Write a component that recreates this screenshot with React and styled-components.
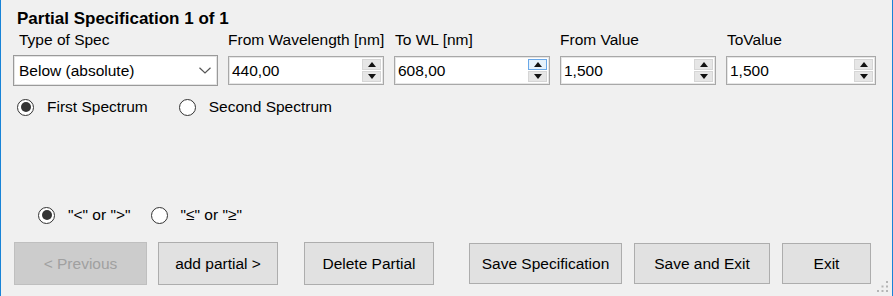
import React from 'react';
import styled, { createGlobalStyle } from 'styled-components';

const GlobalStyle = createGlobalStyle`
  html, body {
    margin: 0;
    padding: 0;
    background: #f0f0f0;
  }
  body {
    font-family: "Liberation Sans", Arial, sans-serif;
  }
`;

const Window = styled.div`
  position: relative;
  width: 893px;
  height: 296px;
  box-sizing: border-box;
  border-left: 1px solid #1883d7;
  border-right: 1px solid #1883d7;
  background: #f0f0f0;
  padding: 9px 0 0 12px;
  display: flex;
  flex-direction: column;
  font-size: 15.5px;
  color: #000;
  overflow: hidden;
`;

const Title = styled.div`
  padding-left: 4px;
  font-size: 17px;
  font-weight: 700;
  line-height: 20px;
`;

const FieldRow = styled.div`
  display: flex;
  gap: 10px;
  margin-top: 2px;
`;

const Column = styled.div`
  display: flex;
  flex-direction: column;
  width: ${(p) => p.$w}px;
`;

const Label = styled.div`
  height: 18px;
  line-height: 18px;
  padding-left: ${(p) => p.$indent || 0}px;
  margin-bottom: 6px;
  white-space: nowrap;
`;

const Combo = styled.div`
  height: 31px;
  box-sizing: border-box;
  border: 1px solid #9a9a9a;
  box-shadow: inset 0 0 0 1px #e4e4e4;
  background: #fff;
  display: flex;
  align-items: center;
  justify-content: space-between;
  padding: 0 6px 0 5px;
  line-height: 29px;
`;

const NumBox = styled.div`
  height: 29px;
  margin-top: 1px;
  box-sizing: border-box;
  border: 1px solid #a8a8a8;
  box-shadow: inset 0 0 0 1px #e6e6e6;
  background: #fff;
  display: flex;
`;

const NumText = styled.div`
  flex: 1;
  padding-left: 3px;
  line-height: 27px;
`;

const Spinner = styled.div`
  width: 19px;
  margin: 2px 2px 2px 0;
  display: flex;
  flex-direction: column;
  gap: 1px;
`;

const SpinButton = styled.div`
  flex: 1;
  box-sizing: border-box;
  display: flex;
  align-items: center;
  justify-content: center;
  background: ${(p) => (p.$hot ? '#e5f1fb' : '#e6e6e6')};
  border: 1px solid ${(p) => (p.$hot ? '#6aa8e8' : '#d6d6d6')};
`;

const Arrow = styled.span`
  width: 0;
  height: 0;
  border-left: 4.5px solid transparent;
  border-right: 4.5px solid transparent;
  ${(p) =>
    p.$up ? 'border-bottom: 5px solid #111;' : 'border-top: 5px solid #111;'}
`;

const RadioRow = styled.div`
  display: flex;
  align-items: center;
  height: 18px;
  margin-top: ${(p) => p.$top}px;
  padding-left: ${(p) => p.$indent}px;
  gap: ${(p) => p.$gap}px;
`;

const RadioItem = styled.label`
  display: inline-flex;
  align-items: center;
  line-height: 18px;
  white-space: nowrap;
`;

const Circle = styled.span`
  width: 17px;
  height: 17px;
  box-sizing: border-box;
  border-radius: 50%;
  border: 1.5px solid #333;
  background: #fff;
  display: inline-flex;
  align-items: center;
  justify-content: center;
  margin-right: 13px;
  &::after {
    content: '';
    width: 10px;
    height: 10px;
    border-radius: 50%;
    background: ${(p) => (p.$checked ? '#333' : 'transparent')};
  }
`;

const ButtonRow = styled.div`
  display: flex;
  align-items: center;
  height: 43px;
  margin-top: 18px;
  padding-left: 1px;
`;

const Button = styled.button`
  width: ${(p) => p.$w}px;
  height: ${(p) => (p.$tall ? 43 : 41)}px;
  margin-left: ${(p) => p.$gap || 0}px;
  box-sizing: border-box;
  border: 1px solid #adadad;
  background: #e1e1e1;
  font-family: inherit;
  font-size: 15.5px;
  color: #000;
  padding: 0;
  &:disabled {
    background: #cccccc;
    border-color: #bfbfbf;
    color: #a0a0a0;
  }
`;

const Grip = styled.svg`
  position: absolute;
  right: 2px;
  bottom: 2px;
`;

const Chevron = () => (
  <svg width="12" height="7" viewBox="0 0 12 7">
    <polyline points="0.5,0.7 6,6 11.5,0.7" fill="none" stroke="#555" strokeWidth="1.2" />
  </svg>
);

const NumericField = ({ label, value, width, indent, hot }) => (
  <Column $w={width}>
    <Label $indent={indent}>{label}</Label>
    <NumBox>
      <NumText>{value}</NumText>
      <Spinner>
        <SpinButton $hot={hot}>
          <Arrow $up />
        </SpinButton>
        <SpinButton>
          <Arrow />
        </SpinButton>
      </Spinner>
    </NumBox>
  </Column>
);

const Radio = ({ checked, children }) => (
  <RadioItem>
    <Circle $checked={checked} />
    {children}
  </RadioItem>
);

const gripDots = [
  [11, 2],
  [6.5, 6.5],
  [11, 6.5],
  [2, 11],
  [6.5, 11],
  [11, 11],
];

export default function App() {
  return (
    <>
      <GlobalStyle />
      <Window>
        <Title>Partial Specification 1 of 1</Title>
        <FieldRow>
          <Column $w={205}>
            <Label $indent={6}>Type of Spec</Label>
            <Combo>
              <span>Below (absolute)</span>
              <Chevron />
            </Combo>
          </Column>
          <NumericField label="From Wavelength [nm]" value="440,00" width={156} />
          <NumericField label="To WL [nm]" value="608,00" width={156} indent={1} hot />
          <NumericField label="From Value" value="1,500" width={156} />
          <NumericField label="ToValue" value="1,500" width={150} indent={1} />
        </FieldRow>
        <RadioRow $top={12} $indent={4} $gap={31}>
          <Radio checked>First Spectrum</Radio>
          <Radio>Second Spectrum</Radio>
        </RadioRow>
        <RadioRow $top={90} $indent={25} $gap={20}>
          <Radio checked>"&lt;" or "&gt;"</Radio>
          <Radio>"≤" or "≥"</Radio>
        </RadioRow>
        <ButtonRow>
          <Button $w={133} $tall disabled>
            &lt; Previous
          </Button>
          <Button $w={120} $gap={11} $tall>
            add partial &gt;
          </Button>
          <Button $w={130} $gap={26} $tall>
            Delete Partial
          </Button>
          <Button $w={153} $gap={35}>
            Save Specification
          </Button>
          <Button $w={136} $gap={12}>
            Save and Exit
          </Button>
          <Button $w={89} $gap={12}>
            Exit
          </Button>
        </ButtonRow>
        <Grip width="14" height="14" viewBox="0 0 14 14">
          {gripDots.map(([x, y]) => (
            <rect key={`${x}-${y}`} x={x - 1} y={y - 1} width="2" height="2" fill="#b5b5b5" />
          ))}
        </Grip>
      </Window>
    </>
  );
}
